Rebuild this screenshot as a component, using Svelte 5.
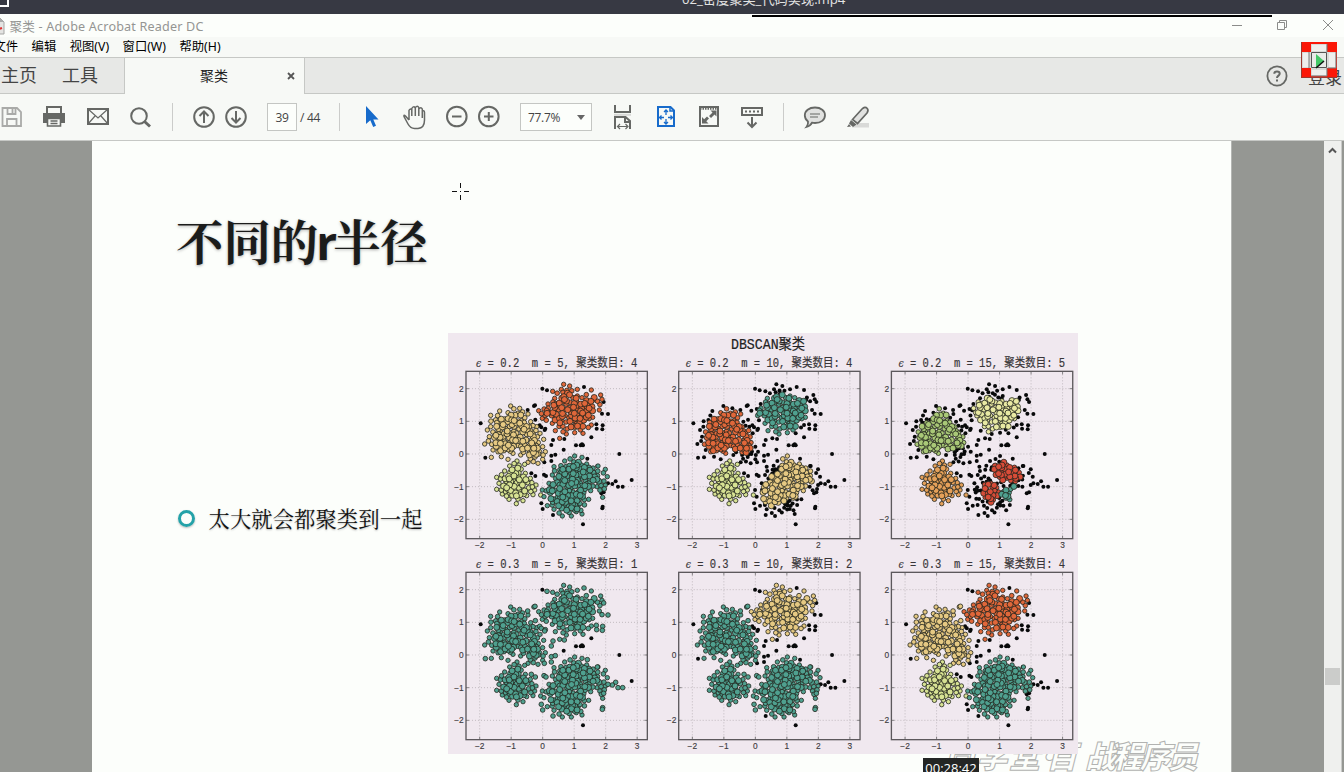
<script>
  const A = [[272,242],[300,222],[320,205],[314,184],[340,178],[347,163],[365,168],[388,178],[388,198],[402,203],[430,180],[458,195],[462,208],[454,240],[434,262],[430,285],[405,310],[380,308],[355,312],[335,325],[322,302],[313,280],[283,265]];
  const B = [[188,228],[215,235],[240,252],[248,275],[266,290],[276,310],[287,328],[284,350],[292,365],[284,388],[270,400],[240,397],[218,375],[195,370],[180,388],[160,380],[130,382],[135,360],[110,342],[124,320],[118,300],[128,290],[128,256],[155,243],[180,248]];
  const C = [[207,393],[230,403],[232,430],[247,445],[264,465],[260,480],[278,495],[255,494],[236,497],[225,512],[205,521],[183,508],[163,492],[146,478],[153,460],[146,442],[170,423],[185,408]];
  const D = [[380,378],[402,382],[416,402],[450,408],[472,418],[478,440],[472,465],[464,502],[447,470],[428,482],[422,508],[402,552],[370,558],[343,558],[318,538],[298,527],[288,500],[283,480],[303,460],[313,435],[318,410],[350,393]];
  const strays = [[283,176],[297,181],[408,171],[467,216],[462,251],[480,252],[239,240],[258,228],[261,226],[262,269],[275,286],[280,292],[292,296],[290,300],[445,283],[464,286],[446,296],[463,298],[430,322],[315,330],[349,327],[310,345],[347,359],[384,346],[398,346],[402,343],[405,346],[310,377],[322,374],[310,393],[289,397],[418,386],[514,372],[250,430],[262,438],[288,434],[294,438],[98,280],[112,383],[448,408],[551,450],[503,454],[493,462],[480,460],[510,470],[524,470],[280,520],[284,537],[315,555],[405,583],[464,530],[463,535],[460,490],[467,487]];

  let seed = 90417;
  function rnd() {
    seed = (seed * 1664525 + 1013904223) % 4294967296;
    return seed / 4294967296;
  }
  function inside(poly, x, y) {
    let c = false;
    for (let i = 0, j = poly.length - 1; i < poly.length; j = i++) {
      const [xi, yi] = poly[i];
      const [xj, yj] = poly[j];
      if (yi > y !== yj > y && x < ((xj - xi) * (y - yi)) / (yj - yi) + xi) c = !c;
    }
    return c;
  }
  function fill(poly, id) {
    const xs = poly.map((p) => p[0]);
    const ys = poly.map((p) => p[1]);
    const x0 = Math.min(...xs), x1 = Math.max(...xs), y0 = Math.min(...ys), y1 = Math.max(...ys);
    const out = poly.map(([x, y]) => ({ x, y, id, r: 6.6, k: rnd() }));
    for (let n = 0; n < 900; n++) {
      const x = x0 + rnd() * (x1 - x0);
      const y = y0 + rnd() * (y1 - y0);
      if (!inside(poly, x, y)) continue;
      const deep = [[16, 0], [-16, 0], [0, 16], [0, -16]].every(([a, b]) => inside(poly, x + a, y + b));
      const gap = deep ? 7.5 : 11.5;
      if (out.some((p) => Math.hypot(p.x - x, p.y - y) < gap)) continue;
      out.push({ x, y, id, r: deep && rnd() > 0.35 ? 9 : 7, k: rnd() });
    }
    return out.sort((a, b) => a.r - b.r);
  }
  const data = [
    ...fill(A, 'A'), ...fill(B, 'B'), ...fill(C, 'C'), ...fill(D, 'D'),
    ...strays.map(([x, y]) => ({ x, y, id: 'S', r: 7, k: 0 }))
  ];

  const teal = '#4fa08f', orange = '#e0673a', sand = '#e6c983', lime = '#d7e293';
  const far = (p) => p.x < 100 || p.x > 530 || p.y > 575 || (p.x === 283 && p.y === 176) || (p.x === 514) || (p.x > 340 && p.x < 435 && p.y > 320 && p.y < 362 && p.x !== 349);

  const core2 = [
    [[[285,245],[305,220],[325,195],[350,190],[400,200],[433,210],[440,245],[432,275],[405,305],[375,310],[350,327],[325,320],[318,290],[295,265]], teal],
    [[[130,290],[160,255],[200,230],[240,245],[245,285],[270,305],[282,345],[255,370],[215,365],[195,380],[150,374],[125,340]], orange],
    [[[375,372],[410,395],[445,415],[468,440],[440,465],[430,495],[400,510],[360,515],[320,535],[295,500],[330,435],[360,430],[358,400]], sand]
  ];
  const core3 = [
    [[[300,225],[325,203],[380,205],[430,210],[437,240],[420,285],[375,308],[345,310],[320,275],[300,260]], '#e8e9a3'],
    [[[125,320],[140,285],[178,270],[190,230],[225,255],[238,280],[266,305],[272,345],[240,357],[205,367],[175,382],[145,365],[128,345]], '#a9c877'],
    [[[358,402],[400,394],[450,428],[430,456],[385,458],[358,430]], '#d84c38'],
    [[[330,462],[367,452],[380,490],[350,520],[326,490]], '#d84c38'],
    [[[386,470],[422,466],[430,490],[404,514],[384,495]], teal]
  ];
  function byCore(cores, cColor, keep) {
    return (p) => {
      if (p.id === 'S') return 'noise';
      if (p.id === 'C') return cColor;
      for (const [poly, color] of cores) if (inside(poly, p.x, p.y)) return color;
      return p.k < keep ? 'noise' : null;
    };
  }
  function byId(colors, reach) {
    return (p) => {
      if (p.id !== 'S') return colors[p.id];
      if (far(p)) return 'noise';
      if (reach > 1) return colors.D;
      if (reach && p.x < 300 && p.y > 400) return colors.D;
      if (reach && p.x > 440 && p.y > 400 && p.x < 480) return colors.D;
      if (p.x < 270 && p.y < 275) return colors.B;
      return 'noise';
    };
  }
  const plots = [
    { e: '0.2', m: 5, n: 4, c: 0, r: 0, pick: (p) => ({ A: orange, B: sand, C: lime, D: teal, S: 'noise' })[p.id] },
    { e: '0.2', m: 10, n: 4, c: 1, r: 0, pick: byCore(core2, lime, 0.8) },
    { e: '0.2', m: 15, n: 5, c: 2, r: 0, pick: byCore(core3, '#e4a059', 0.7) },
    { e: '0.3', m: 5, n: 1, c: 0, r: 1, pick: byId({ A: teal, B: teal, C: teal, D: teal }, 2) },
    { e: '0.3', m: 10, n: 2, c: 1, r: 1, pick: byId({ A: sand, B: teal, C: teal, D: teal }, 1) },
    { e: '0.3', m: 15, n: 4, c: 2, r: 1, pick: byId({ A: orange, B: sand, C: lime, D: teal }, 0) }
  ].map((pl) => ({
    ...pl,
    dots: data
      .map((p) => ({ ...p, fill: pl.pick(p) }))
      .filter((p) => p.fill)
      .sort((a, b) => (a.fill === 'noise' ? 0 : 1) - (b.fill === 'noise' ? 0 : 1))
  }));
  const xt = [-2, -1, 0, 1, 2, 3];
  const yt = [2, 1, 0, -1, -2];
  const minus = (v) => String(v).replace('-', '−');
</script>

<div class="screen">
  <div class="player"><i class="sq"></i><span>02_密度聚类_代码实现.mp4</span></div>
  <header class="caption">
    <svg class="doc" width="6" height="18"><path d="M-6 1H0L4 5V17H-6" fill="#e4e4e2" stroke="#a5a6a4"/><path d="M0 1V5H4" fill="#aaa"/><path d="M-1 12L2 11" stroke="#d33" stroke-width="2"/></svg>
    <span>聚类 - Adobe Acrobat Reader DC</span>
    <svg class="win" width="112" height="20" fill="none" stroke="#8b8c8a"><path d="M1 10.500H11M46.500 7.500H53.500V14.500H46.500ZM48.500 7V5.500H55.500V12.500H54M92 5L102 15M102 5L92 15"/></svg>
  </header>
  <nav class="menu"><span>文件</span><span>编辑</span><span>视图(V)</span><span>窗口(W)</span><span>帮助(H)</span></nav>
  <div class="tabs">
    <div class="left"><span>主页</span><span>工具</span></div>
    <div class="active"><span>聚类</span><svg width="8" height="8" stroke="#555" stroke-width="1.800"><path d="M1 1L7 7M7 1L1 7"/></svg></div>
    <div class="rest">
      <svg width="22" height="22" viewBox="0 0 22 22" fill="none" stroke="#666865" stroke-width="1.800"><circle cx="11" cy="11" r="9.600"/><path d="M8.300 8.800Q8.300 6.500 11 6.500T13.700 8.800C13.700 10.500 11 10.800 11 13" stroke-width="2"/><path d="M11 14.500V16.500" stroke-width="2"/></svg>
      <span>登录</span>
    </div>
  </div>
  <div class="tools">
    <svg width="900" height="46" viewBox="0 94 900 46" fill="none" stroke="#666865" stroke-width="2">
      <g stroke="#a9aaa8" stroke-width="1.800"><path d="M2.500 108H17L21 112V126H2.500ZM7.500 108V114H15.500V108M7 126V119H16.500V126"/><path d="M12.500 109V113"/></g>
      <path d="M47 114V107H61V114" /><path d="M43 113H65V123H61V119H47V123H43Z" fill="#666865" stroke="none"/><path d="M47.500 118.500H60.500V126H47.500ZM50.500 121H57.500M50.500 123.500H57.500" stroke-width="1.600"/>
      <path d="M88 109H108V124H88Z"/><path d="M88 109L98 118L108 109M88 124L95 116M108 124L101 116" stroke-width="1.200"/>
      <circle cx="139" cy="116" r="7.800"/><path d="M144.500 121.500L150 126.500" stroke-width="3"/>
      <path d="M172.500 103V131M339.500 103V131M783.500 103V131" stroke="#cbccca" stroke-width="1"/>
      <circle cx="204" cy="117" r="9.800"/><path d="M204 123V111.500M199.500 116L204 111.500L208.500 116"/>
      <circle cx="236" cy="117" r="9.800"/><path d="M236 111V122.500M231.500 118L236 122.500L240.500 118"/>
      <path d="M366 106V124L370.300 120.300L373.200 127L376 125.700L373.300 119.500H378.500Z" fill="#176bcb" stroke="none"/>
      <path d="M409 120L405.500 116Q403.500 114.200 404 116.500L408 124Q410.500 128.500 414.500 128.500H418Q424.500 128 424.500 120V112.500Q424.300 110 422.300 111V118M422.300 112V109Q421 106.500 418.800 109V116M418.800 110V107.500Q417.500 105 415.300 107.500V116M415.300 108Q413.500 105.500 411.800 108.500V116M411.800 110Q410 108 409 110.500V120" stroke-width="1.500"/>
      <circle cx="456.800" cy="116.500" r="9.800"/><path d="M452 116.500H461.500"/>
      <circle cx="488.800" cy="116.500" r="9.800"/><path d="M484 116.500H493.500M488.800 112V121"/>
      <path d="M615 105V112H630V105"/><path d="M614 114.800H631" stroke="#d7d8d6"/><path d="M615 129V117H625.500L630 121V129M625 117V122H630"/><path d="M618 126.500H627M620 124L617.500 126.500L620 129M625.500 124L628 126.500L625.500 129" stroke-width="1.200"/>
      <g stroke="#176bcb"><path d="M658 107H670.500L674 110.500V126H658Z"/><path d="M670 107V111H674" stroke-width="1.500"/><path d="M666 110.500V115M666 119V123.500M660.500 117.500H664M668 117.500H672M664 112L666 110L668 112M664 122L666 124L668 122M661.500 115.500L659.500 117.500L661.500 119.500M670.500 115.500L672.500 117.500L670.500 119.500" stroke-width="1.300"/></g>
      <path d="M700 107H718V126H700Z"/><path d="M700 108.500H718" stroke-width="2.500" stroke-dasharray="1.500 1"/><path d="M710.500 110.500H716.500V116.500L714.500 114.500L711 118L709 116L712.500 112.500ZM702 117V123.500H708.500L706.300 121.300L709 118.500L707 116.500L704.200 119.200Z" fill="#666865" stroke="none"/>
      <path d="M742 108H762V115H742Z"/><path d="M745 111.500H760" stroke-dasharray="2 2"/><path d="M752 117V127M747.500 122.500L752 127L756.500 122.500"/>
      <path d="M815 107.500C821 107.500 825 110.800 825 115.300S821 123 815 123Q813.500 123 812 122.700Q810.500 126 806.500 127Q808.500 124.500 808 121.500Q804.800 119.200 804.800 115.300C804.800 110.800 809 107.500 815 107.500Z" fill="#e1e2e0" stroke-width="1.800"/><path d="M810 114H820M810 117H818" stroke-width="1.200"/>
      <path d="M852 127L858 123H869V127.500H852Z" fill="#d9dad8" stroke="none"/><path d="M852.500 119.500L862 109Q865 106 867.300 108.500C868.500 110 868 111.500 867 113L857.500 123.500Z" fill="#e1e2e0" stroke-width="1.700"/><path d="M851 120L856.500 124.500L853 127L849 123.500ZM849 124L851 126.500L847 127Z" fill="#666865" stroke="none"/>
    </svg>
    <div class="box page-no">39</div><span class="total">/ 44</span>
    <div class="box zoom"><span>77.7%</span><i></i></div>
  </div>
  <main>
    <section class="page">
      <h1>不同的<b>r</b>半径</h1>
      <div class="row">
        <p><i></i><span>太大就会都聚类到一起</span></p>
        <svg class="figure" width="630" height="421" viewBox="0 0 630 421">
          <rect width="630" height="421" fill="#f0e8ef"/>
          <text class="ft" x="283" y="15.500" textLength="74" lengthAdjust="spacingAndGlyphs">DBSCAN聚类</text>
          {#each plots as pl}
            <g transform="translate({pl.c * 212.7} {pl.r * 201 - 3}) scale(.33333)">
              <text class="pt" x={pl.m > 9 ? 75 : 84} y="111" textLength={pl.m > 9 ? 500 : 484} lengthAdjust="spacingAndGlyphs"><tspan class="eps">ϵ</tspan> = {pl.e}&nbsp; m = {pl.m}, 聚类数目: {pl.n}</text>
              {#each xt as v}
                <path class="gr" d="M{284 + v * 94.5} 124V626"/>
                <path class="tk" d="M{284 + v * 94.5} 124v9M{284 + v * 94.5} 626v-9"/>
                <text class="nm" x={284 + v * 94.5} y="653" text-anchor="middle">{minus(v)}</text>
              {/each}
              {#each yt as v}
                <path class="gr" d="M54 {372 - v * 98}H598"/>
                <path class="tk" d="M54 {372 - v * 98}h9M598 {372 - v * 98}h-9"/>
                <text class="nm" x="47" y={381 - v * 98} text-anchor="end">{minus(v)}</text>
              {/each}
              {#each pl.dots as p}
                {#if p.fill === 'noise'}
                  <circle cx={p.x} cy={p.y} r="6" fill="#08090a"/>
                {:else}
                  <circle cx={p.x} cy={p.y} r={p.r} fill={p.fill} stroke="#22241d" stroke-width="2.400"/>
                {/if}
              {/each}
              <rect x="54" y="124" width="544" height="502" fill="none" stroke="#5c585c" stroke-width="4"/>
            </g>
          {/each}
        </svg>
      </div>
      <svg class="mark" width="270" height="40" viewBox="0 0 270 40">
        <text x="4" y="32" textLength="96">尚学堂</text><text x="92" y="32">·</text><text x="106" y="32" textLength="70">百战</text><text x="172" y="32" textLength="86">程序员</text>
      </svg>
    </section>
    <aside><svg width="18" height="18" fill="none" stroke="#555" stroke-width="2"><path d="M5 11.500L8.500 8L12 11.500"/></svg><i></i></aside>
  </main>

  <i class="line"></i>
  <svg class="cross" width="17" height="17" stroke="#111"><path d="M0 8.500H5M12 8.500H17M8.500 0V5M8.500 12V17M8 8.500H9"/></svg>
  <svg class="rec" width="37" height="36" viewBox="0 0 37 36"><path d="M0 0H36V36H0Z" fill="#fb1707"/><path d="M10 2H26V10H35V26H26V34H10V26H1V10H10Z" fill="#d9dad8"/><path d="M11 3H25V9H11ZM2 11H8V25H2ZM28 11H34V25H28ZM11 28H25V33H11Z" fill="#efefed"/><path d="M26 2V10M35 10V26H27M10 34H26V26M8 10V26" fill="none" stroke="#777"/><path d="M10.500 10.500H25.500V25.500H10.500Z" fill="#e9eae8" stroke="#555"/><path d="M15 12L23 19L15 26Z" fill="#43c767"/><path d="M15 26L23 19" stroke="#111" stroke-width="1.500"/><path d="M.5 0V35.500H36" fill="none" stroke="#9b3930"/></svg>
  <div class="time">00:28:42</div>
</div>

<style>
  :global(body) { margin: 0; overflow: hidden; }
  .screen { position: relative; width: 1344px; height: 772px; overflow: hidden; display: flex; flex-direction: column; background: #fcfefb; font-family: "Noto Sans", "Noto Sans CJK SC", sans-serif; color: #111; }
  .player { height: 14px; flex: none; background: #373943; color: #e4e4e4; overflow: hidden; display: flex; align-items: flex-start; font-family: "Open Sans", "Noto Sans CJK SC", sans-serif; font-size: 13.2px; line-height: 20px; }
  .player span { margin: -11px 0 0 673px; white-space: nowrap; }
  .sq { width: 8px; height: 5px; border: solid #fff; border-width: 0 2px 2px 0; margin-left: -1px; }
  .caption { height: 23px; flex: none; display: flex; align-items: center; color: #949593; font-size: 12.6px; }
  .caption span { margin-left: 3.500px; white-space: nowrap; letter-spacing: .18px; }
  .doc { flex: none; }
  .win { margin: -2px 0 0 auto; margin-right: 1px; }
  .menu { height: 20px; flex: none; background: #f7f9f6; display: flex; gap: 13.5px; font-size: 12.3px; line-height: 20px; color: #000; white-space: nowrap; }
  .menu span:first-child { margin-left: -6.500px; }
  .tabs { height: 37px; flex: none; display: flex; box-sizing: border-box; border-top: 1px solid #c6c8c5; background: #e7e8e6; color: #444; }
  .left { box-sizing: border-box; border-bottom: 1px solid #c6c8c5; border-right: 1px solid #c6c8c5; display: flex; gap: 25px; font-size: 18px; line-height: 34px; width: 125px; padding-left: 1px; }
  .active { width: 179px; background: #f7f9f6; display: flex; align-items: center; justify-content: flex-end; gap: 59px; font-size: 14px; color: #222; padding-right: 9px; box-sizing: border-box; }
  .active span { margin-top: -2px; }
  .rest { flex: 1; border-left: 1px solid #c6c8c5; border-bottom: 1px solid #c6c8c5; display: flex; justify-content: flex-end; align-items: center; gap: 20px; font-size: 17px; white-space: nowrap; }
  .rest span { margin: 4px 2px 0 0; line-height: 34px; }
  .tools { height: 47px; box-sizing: border-box; flex: none; background: #f7f9f6; border-bottom: 1px solid #c6c8c5; display: grid; grid-template-columns: 267px 30px 223px 72px 1fr; align-items: center; font-family: "Open Sans", sans-serif; font-size: 12px; color: #444; }
  .tools > svg { grid-area: 1 / 1 / 2 / 6; }
  .box { box-sizing: border-box; height: 28px; border: 1px solid #c4c6c3; background: #fcfefb; display: flex; align-items: center; grid-row: 1; }
  .page-no { grid-column: 2; justify-content: center; letter-spacing: -.4px; }
  .total { grid-column: 3; grid-row: 1; margin-left: 3px; letter-spacing: -.3px; }
  .zoom { grid-column: 4; padding: 0 6px 0 7px; justify-content: space-between; letter-spacing: -.3px; }
  .zoom i { border: 4px solid transparent; border-top: 5px solid #666; border-bottom: 0; }
  main { flex: 1; min-height: 0; display: flex; background: #959793; padding-left: 92px; }
  .page { position: relative; width: 1140px; background: #fcfefb; box-sizing: border-box; padding: 64px 0 0 84px; border-right: 1px solid #b4b6b3; overflow: hidden; }
  h1 { margin: 0; font: 700 47.500px/70px "Noto Serif CJK SC", "Noto Sans CJK SC", sans-serif; height: 128px; letter-spacing: -.1px; color: #1b1c1b; text-shadow: 0 1px 3px #aaa; }
  h1 b { font-family: "Open Sans", sans-serif; font-weight: 700; font-size: 46px; line-height: 1; display: inline-block; width: 16px; margin-left: -2px; margin-right: 1px; }
  .row { display: flex; align-items: flex-start; }
  p { margin: 170px 0 0 1.500px; width: 270.500px; display: flex; align-items: center; gap: 14px; font: 400 21.400px/30px "Noto Serif CJK SC", "Noto Sans CJK SC", sans-serif; white-space: nowrap; box-sizing: border-box; text-shadow: 0 1px 2px #bbb; }
  p i { width: 11px; height: 11px; border: 3px solid #24a2a8; border-radius: 50%; box-shadow: 0 1px 2px #bbb; }
  .figure { position: relative; z-index: 1; flex: none; }
  .ft { font: 14.500px "Liberation Mono", "Noto Sans CJK SC", monospace; fill: #222; stroke: #222; stroke-width: .2; }
  .pt { font: 36px "Liberation Mono", "Noto Sans CJK SC", monospace; fill: #383538; stroke: #383538; stroke-width: .5; }
  .eps { font-family: "DejaVu Serif", serif; font-size: 32px; font-style: italic; }
  .nm { font: 25px "Liberation Sans", sans-serif; fill: #3e3b3e; stroke: #3e3b3e; stroke-width: .4; }
  .gr { stroke: #b5aeb4; stroke-width: 2.400; stroke-dasharray: 3 6; }
  .tk { stroke: #555; stroke-width: 2; }
  .mark { position: absolute; left: 848px; top: 595px; }
  .mark text { font: italic 900 31px "Noto Sans CJK SC", sans-serif; fill: #fcfefb; stroke: #b2b3b1; stroke-width: 1; }
  aside { margin-left: auto; width: 17px; border-right: 1px solid #c9cac8; background: #eff0ee; margin-right: 2px; display: flex; flex-direction: column; }
  aside i { margin: 509px 0 0 1px; width: 15px; height: 17px; background: #cbccca; }
  .line { position: absolute; left: 752px; top: 15px; width: 520px; height: 2px; background: #000; }
  .cross { position: absolute; left: 452px; top: 183px; }
  .rec { position: absolute; left: 1301px; top: 42px; }
  .time { position: absolute; left: 923px; top: 758px; width: 56px; height: 20px; background: #232524; color: #fff; font: 13px/21px "Open Sans", sans-serif; text-align: center; z-index: 2; }
</style>
